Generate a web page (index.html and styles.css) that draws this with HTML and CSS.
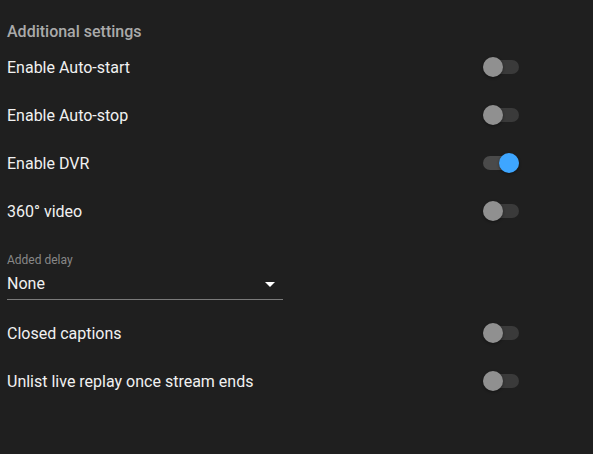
FILE: index.html
```html
<!DOCTYPE html>
<html>
<head>
<meta charset="utf-8">
<link rel="stylesheet" href="styles.css">
</head>
<body>
<div class="panel">
  <div class="header">Additional settings</div>
  <div class="row"><span class="label">Enable Auto-start</span><span class="toggle"><span class="track"></span><span class="knob"></span></span></div>
  <div class="row"><span class="label">Enable Auto-stop</span><span class="toggle"><span class="track"></span><span class="knob"></span></span></div>
  <div class="row"><span class="label">Enable DVR</span><span class="toggle on"><span class="track"></span><span class="knob"></span></span></div>
  <div class="row"><span class="label">360° video</span><span class="toggle"><span class="track"></span><span class="knob"></span></span></div>
  <div class="select">
    <div class="select-label">Added delay</div>
    <div class="select-field"><span>None</span><svg class="arrow" width="10" height="5" viewBox="0 0 10 5"><path d="M0 0h10L5 5z" fill="#fff"/></svg></div>
  </div>
  <div class="row"><span class="label">Closed captions</span><span class="toggle"><span class="track"></span><span class="knob"></span></span></div>
  <div class="row"><span class="label">Unlist live replay once stream ends</span><span class="toggle"><span class="track"></span><span class="knob"></span></span></div>
</div>
</body>
</html>
```
FILE: styles.css
```css
html, body {
  margin: 0;
  padding: 0;
  background: #1f1f1f;
  height: 100%;
}
body {
  font-family: Roboto, "Liberation Sans", sans-serif;
  color: #f1f1f1;
}
.panel {
  width: 512px;
  padding: 19px 0 0 7px;
}
.header {
  font-size: 16px;
  font-weight: 500;
  line-height: 22px;
  padding-top: 2px;
  color: #aaaaaa;
}
.row {
  height: 48px;
  display: flex;
  align-items: center;
  justify-content: space-between;
}
.label {
  font-size: 16px;
  line-height: 24px;
  padding-top: 1px;
}
.toggle {
  position: relative;
  width: 36px;
  height: 20px;
  display: block;
}
.track {
  position: absolute;
  left: 0;
  top: 3px;
  width: 36px;
  height: 14px;
  border-radius: 7px;
  background: #3a3a3a;
}
.knob {
  position: absolute;
  left: 0;
  top: 0;
  width: 20px;
  height: 20px;
  border-radius: 50%;
  background: #909090;
  box-shadow: 0 1px 3px rgba(0,0,0,0.4);
}
.toggle.on .track {
  background: #4a4a4a;
}
.toggle.on .knob {
  left: 16px;
  background: #3ea6ff;
}
.select {
  width: 276px;
  padding: 17px 0 9px;
}
.select-label {
  font-size: 12px;
  line-height: 16px;
  color: #888888;
}
.select-field {
  display: flex;
  align-items: center;
  justify-content: space-between;
  font-size: 16px;
  line-height: 24px;
  padding: 4px 8px 3px 0;
  border-bottom: 1px solid #7a7a7a;
}
.arrow {
  display: block;
}
```
